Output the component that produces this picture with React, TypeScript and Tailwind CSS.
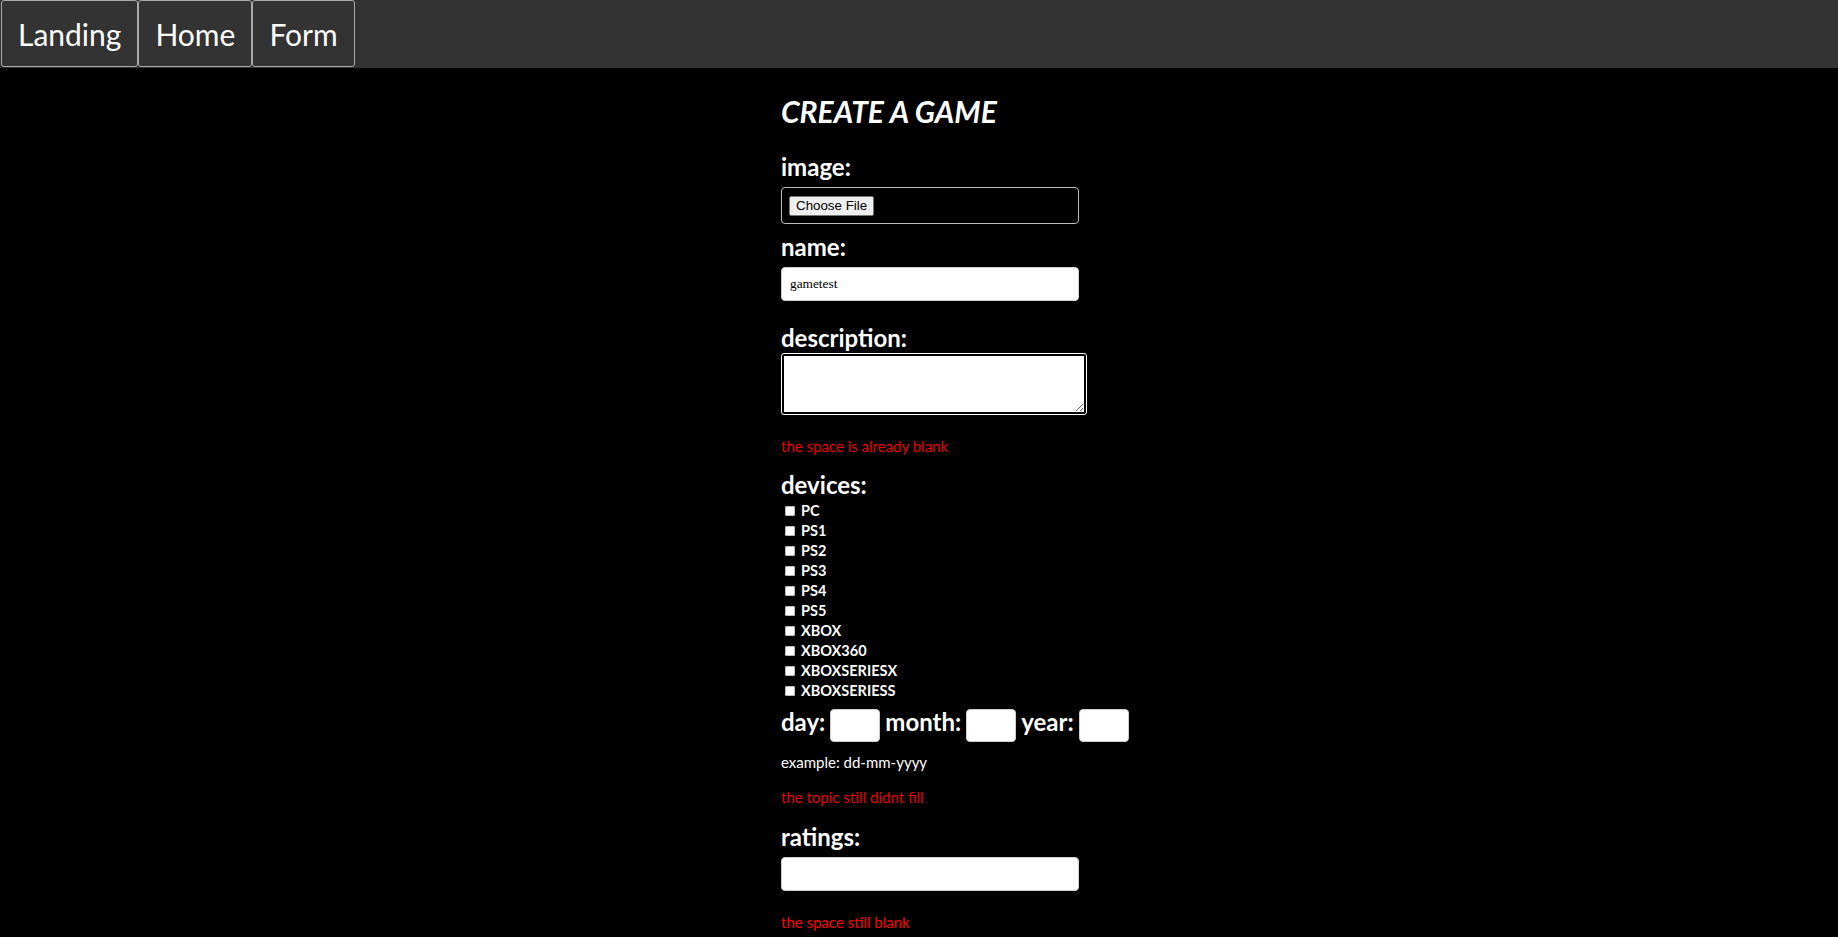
import React from "react"

const devices = ["PC", "PS1", "PS2", "PS3", "PS4", "PS5", "XBOX", "XBOX360", "XBOXSERIESX", "XBOXSERIESS"]

const NavButton = ({ label }: { label: string }) => {
  return (
    <button className="h-[67px] px-[16px] border border-[#a9a9a9] rounded-[3px] bg-[#333333] text-white text-[30px] leading-[36px] font-normal flex items-center">
      {label}
    </button>
  )
}

const Label = ({ children, className = "" }: { children: React.ReactNode; className?: string }) => {
  return <h3 className={"text-white text-[24px] leading-[28px] font-bold " + className}>{children}</h3>
}

const App = () => {
  return (
    <div className="min-h-screen w-full bg-black font-['Lato','Open_Sans',sans-serif]">
      <nav className="h-[68px] w-full bg-[#333333] flex items-start pl-px">
        <NavButton label="Landing" />
        <NavButton label="Home" />
        <NavButton label="Form" />
      </nav>

      <form className="mx-auto w-[276px] pt-[25px] pb-10">
        <h1 className="text-white text-[30px] leading-[36px] font-bold italic">CREATE A GAME</h1>

        <Label className="mt-[24px]">image:</Label>
        <label className="mt-[6px] flex items-center w-[298px] h-[37px] border border-[#bdbdbd] rounded-[4px] pl-[7px]">
          <span className="h-[20px] px-[6px] flex items-center bg-[#efefef] border border-[#767676] rounded-[2px] text-black text-[13.33px] font-['Liberation_Sans',Arial,sans-serif]">
            Choose File
          </span>
        </label>

        <Label className="mt-[9px]">name:</Label>
        <input
          type="text"
          defaultValue="gametest"
          className="mt-[6px] block w-[298px] h-[34px] bg-white border border-[#cfcfcf] rounded-[4px] px-[8px] text-black text-[13.33px] font-['Liberation_Serif','Times_New_Roman',serif] outline-none"
        />

        <Label className="mt-[23px]">description:</Label>
        <textarea className="mt-[2px] ml-px block w-[304px] h-[60px] bg-white border-2 border-black rounded-[2px] outline outline-1 outline-white text-black text-[13.33px] font-['Liberation_Serif',serif]" />

        <p className="mt-[22px] text-[#e60000] text-[15px] leading-[20px]">the space is already blank</p>

        <Label className="mt-[15px]">devices:</Label>
        <div className="mt-[2px] flex flex-col">
          {devices.map((d, i) => (
            <label key={i} className="h-[20px] flex items-center">
              <input type="checkbox" className="appearance-none ml-[4px] mr-[6px] w-[10px] h-[10px] bg-white border border-[#bdbdbd] rounded-[1px]" />
              <span className="text-white text-[14.5px] leading-[20px] font-bold">{d}</span>
            </label>
          ))}
        </div>

        <div className="mt-[8px] flex items-start gap-[5px] whitespace-nowrap">
          <Label className="-mt-px">day:</Label>
          <input type="text" className="w-[50px] h-[33px] bg-white border border-[#cfcfcf] rounded-[4px] outline-none" />
          <Label className="-mt-px">month:</Label>
          <input type="text" className="w-[50px] h-[33px] bg-white border border-[#cfcfcf] rounded-[4px] outline-none" />
          <Label className="-mt-px">year:</Label>
          <input type="text" className="w-[50px] h-[33px] bg-white border border-[#cfcfcf] rounded-[4px] outline-none" />
        </div>

        <p className="mt-[10px] text-white text-[15px] leading-[20px]">example: dd-mm-yyyy</p>

        <p className="mt-[15px] text-[#e60000] text-[15px] leading-[20px]">the topic still didnt fill</p>

        <Label className="mt-[16px]">ratings:</Label>
        <input
          type="text"
          className="mt-[6px] block w-[298px] h-[34px] bg-white border border-[#cfcfcf] rounded-[4px] px-[8px] outline-none"
        />

        <p className="mt-[21px] text-[#ff0000] text-[15px] leading-[20px]">the space still blank</p>
      </form>
    </div>
  )
}

export default App
